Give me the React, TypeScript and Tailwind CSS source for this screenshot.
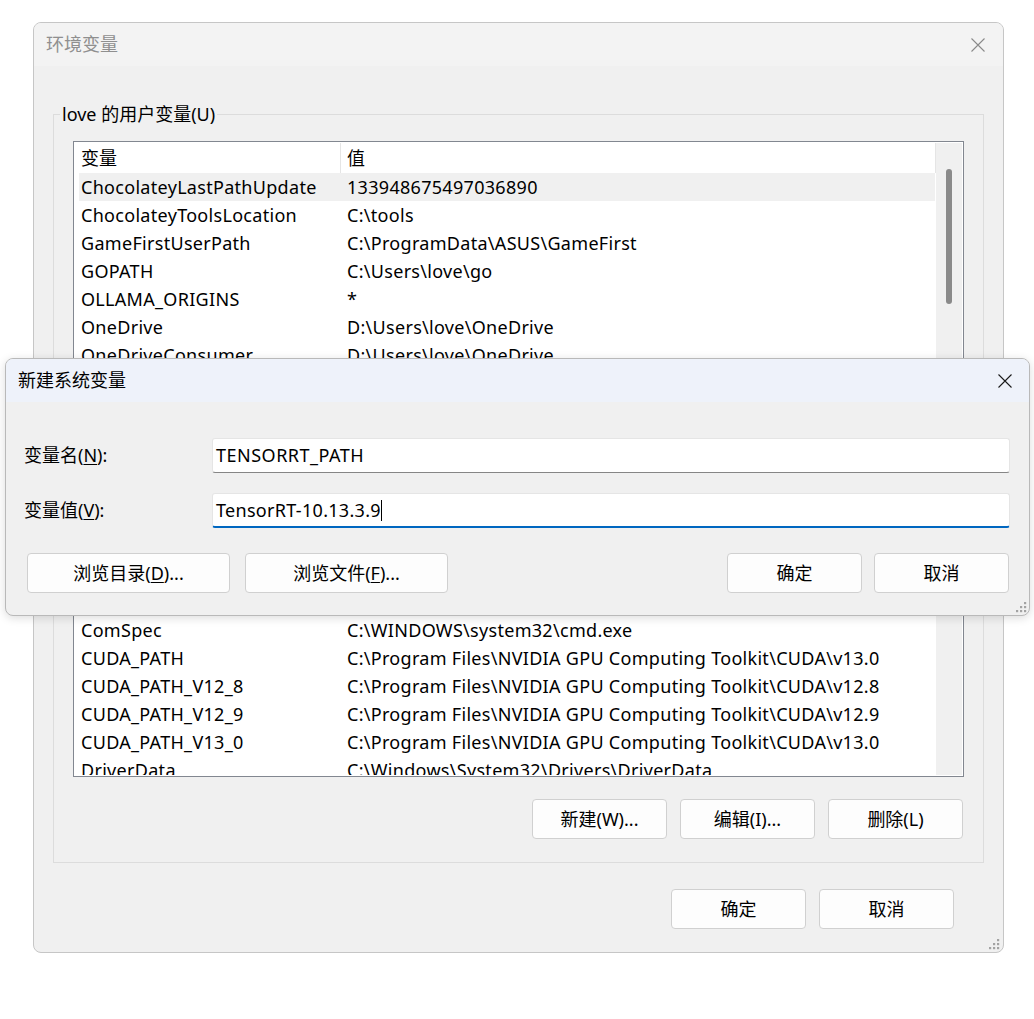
import clsx from 'clsx'

const USER_VARS: [string, string][] = [
  ['ChocolateyLastPathUpdate', '133948675497036890'],
  ['ChocolateyToolsLocation', 'C:\\tools'],
  ['GameFirstUserPath', 'C:\\ProgramData\\ASUS\\GameFirst'],
  ['GOPATH', 'C:\\Users\\love\\go'],
  ['OLLAMA_ORIGINS', '*'],
  ['OneDrive', 'D:\\Users\\love\\OneDrive'],
  ['OneDriveConsumer', 'D:\\Users\\love\\OneDrive'],
  ['Path', 'D:\\Users\\love\\AppData\\Local\\Microsoft\\WindowsApps;'],
]

const SYSTEM_VARS: [string, string][] = [
  ['ACSetupSvcPort', '23210'],
  ['ACSvcPort', '17532'],
  ['ComSpec', 'C:\\WINDOWS\\system32\\cmd.exe'],
  ['CUDA_PATH', 'C:\\Program Files\\NVIDIA GPU Computing Toolkit\\CUDA\\v13.0'],
  ['CUDA_PATH_V12_8', 'C:\\Program Files\\NVIDIA GPU Computing Toolkit\\CUDA\\v12.8'],
  ['CUDA_PATH_V12_9', 'C:\\Program Files\\NVIDIA GPU Computing Toolkit\\CUDA\\v12.9'],
  ['CUDA_PATH_V13_0', 'C:\\Program Files\\NVIDIA GPU Computing Toolkit\\CUDA\\v13.0'],
  ['DriverData', 'C:\\Windows\\System32\\Drivers\\DriverData'],
  ['NUMBER_OF_PROCESSORS', '16'],
]

function CloseIcon({ className }: { className: string }) {
  return (
    <svg width="16" height="16" viewBox="0 0 16 16" className={className}>
      <path d="M1.5 1.5 L14.5 14.5 M14.5 1.5 L1.5 14.5" stroke="currentColor" strokeWidth="1.1" fill="none" />
    </svg>
  )
}

function Grip({ className }: { className: string }) {
  const dots = [
    [9, 1],
    [5, 5],
    [9, 5],
    [1, 9],
    [5, 9],
    [9, 9],
  ]
  return (
    <svg width="12" height="12" viewBox="0 0 12 12" className={className}>
      {dots.map(([x, y]) => (
        <rect key={`${x}-${y}`} x={x} y={y} width="2.2" height="2.2" fill="#a3a3a3" />
      ))}
    </svg>
  )
}

function Btn({ children, wide }: { children: React.ReactNode; wide?: boolean }) {
  return (
    <button
      className={clsx(
        'flex h-[40px] shrink-0 items-center justify-center rounded-[4px] border border-[#d0d0d0] bg-[#fdfdfd] text-[18px] tracking-normal text-black',
        wide ? 'w-[203px]' : 'w-[135px]',
      )}
    >
      {children}
    </button>
  )
}

function VarList({
  rows,
  selected,
  tall,
  thumb,
}: {
  rows: [string, string][]
  selected?: number
  tall?: boolean
  thumb: 'user' | 'system'
}) {
  return (
    <div
      className={clsx(
        'flex overflow-hidden border border-[#828790] bg-white p-px',
        tall ? 'h-[251px]' : 'h-[249px]',
      )}
    >
      <div className="flex min-w-0 flex-1 flex-col overflow-hidden">
        <div className="flex h-[30px] shrink-0 items-center border-r border-[#e5e5e5]">
          <div className="flex h-full w-[266px] shrink-0 items-center border-r border-[#e5e5e5] pl-[6px]">变量</div>
          <div className="pl-[6px]">值</div>
        </div>
        {rows.map(([name, value], i) => (
          <div
            key={name}
            className={clsx(
              'ml-[4px] mr-px flex h-[28px] shrink-0 items-center tracking-[0.3px]',
              i === selected && 'bg-[#f0f0f0]',
            )}
          >
            <div className="w-[262px] shrink-0 whitespace-nowrap pl-[2px]">{name}</div>
            <div className="whitespace-nowrap pl-[6px]">{value}</div>
          </div>
        ))}
      </div>
      <div className="w-[26px] shrink-0 bg-[#f0f0f0]">
        <div
          className={clsx(
            'mx-auto w-[6px] rounded-full bg-[#8a8a8a]',
            thumb === 'user' ? 'mt-[26px] h-[135px]' : 'mt-[22px] h-[60px]',
          )}
        />
      </div>
    </div>
  )
}

function GroupBox({ label, children, className }: { label: string; children: React.ReactNode; className?: string }) {
  return (
    <div className={clsx('relative mx-[19px] border border-[#dcdcdc] px-[19px] pt-[26px] pb-[23px]', className)}>
      <span className="absolute left-[6px] top-[-13px] bg-[#f0f0f0] px-[2px] text-[18px] leading-[24px]">{label}</span>
      {children}
    </div>
  )
}

export default function App() {
  return (
    <div className="relative h-[1019px] w-[1034px] overflow-hidden bg-white font-['Noto_Sans','Noto_Sans_CJK_SC',sans-serif] text-[18px] text-black">
      {/* 环境变量 (inactive, behind) */}
      <div className="absolute left-[33px] top-[22px] flex h-[931px] w-[971px] flex-col rounded-[8px] border border-[#c6c6c6] bg-[#f0f0f0]">
        <div className="flex h-[43px] shrink-0 items-center justify-between rounded-t-[7px] bg-[#f3f3f3] pl-[12px] pr-[17px]">
          <span className="text-[#8f8f8f]">环境变量</span>
          <CloseIcon className="text-[#8a8a8a]" />
        </div>

        <div className="flex flex-1 flex-col pt-[48px]">
          <GroupBox label="love 的用户变量(U)">
            <VarList rows={USER_VARS} selected={0} tall thumb="user" />
            <div className="mt-[22px] flex justify-end gap-[13px]">
              <Btn>新建(N)...</Btn>
              <Btn>编辑(E)...</Btn>
              <Btn>删除(D)</Btn>
            </div>
          </GroupBox>

          <GroupBox label="系统变量(S)" className="mt-[23px]">
            <VarList rows={SYSTEM_VARS} thumb="system" />
            <div className="mt-[22px] flex justify-end gap-[13px] pr-px">
              <Btn>新建(W)...</Btn>
              <Btn>编辑(I)...</Btn>
              <Btn>删除(L)</Btn>
            </div>
          </GroupBox>

          <div className="mt-[26px] flex justify-end gap-[13px] pr-[49px]">
            <Btn>确定</Btn>
            <Btn>取消</Btn>
          </div>
        </div>
        <Grip className="absolute bottom-[2px] right-[3px]" />
      </div>

      {/* 新建系统变量 (active dialog) */}
      <div className="absolute left-[5px] top-[358px] w-[1025px] rounded-[8px] border border-[#b9b9b9] bg-[#f0f0f0] shadow-[0_2px_10px_rgba(0,0,0,0.14)]">
        <div className="flex h-[43px] items-center justify-between rounded-t-[7px] bg-[#eef2fa] pl-[12px] pr-[16px]">
          <span>新建系统变量</span>
          <CloseIcon className="text-[#1a1a1a]" />
        </div>

        <div className="grid grid-cols-[188px_1fr] items-center gap-y-[20px] pl-[18px] pr-[19px] pt-[36px]">
          <span>
            变量名(<span className="underline underline-offset-2">N</span>):
          </span>
          <div className="flex h-[35px] items-center rounded-[3px] border border-[#e5e5e5] border-b-[#868686] bg-white pl-[3px] tracking-[0.5px]">
            TENSORRT_PATH
          </div>
          <span>
            变量值(<span className="underline underline-offset-2">V</span>):
          </span>
          <div className="flex h-[35px] items-center rounded-[3px] border border-b-2 border-[#e5e5e5] border-b-[#0067c0] bg-white pl-[3px] tracking-[0.3px]">
            TensorRT-10.13.3.9
            <span className="inline-block h-[21px] w-px bg-black" />
          </div>
        </div>

        <div className="flex items-center gap-[15px] pb-[22px] pl-[21px] pr-[20px] pt-[25px]">
          <Btn wide>
            浏览目录(<span className="underline underline-offset-2">D</span>)...
          </Btn>
          <Btn wide>
            浏览文件(<span className="underline underline-offset-2">F</span>)...
          </Btn>
          <div className="ml-auto flex gap-[12px]">
            <Btn>确定</Btn>
            <Btn>取消</Btn>
          </div>
        </div>
        <Grip className="absolute bottom-[2px] right-[2px]" />
      </div>
    </div>
  )
}
